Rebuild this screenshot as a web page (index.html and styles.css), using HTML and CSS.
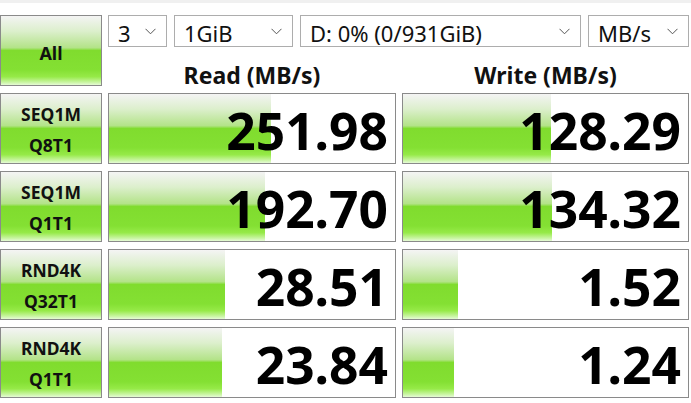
FILE: index.html
```html
<!DOCTYPE html>
<html>
<head>
<meta charset="utf-8">
<link rel="stylesheet" href="styles.css">
</head>
<body>
<div class="topstrip"></div>
<div class="grid">
  <div class="btn all">All</div>
  <div class="head">
    <div class="selects">
      <div class="sel w1"><span>3</span><svg class="chev" width="11" height="7" viewBox="0 0 11 7"><path d="M0.5 0.8 L5.5 5.8 L10.5 0.8" fill="none" stroke="#555" stroke-width="1"/></svg></div>
      <div class="sel w2"><span>1GiB</span><svg class="chev" width="11" height="7" viewBox="0 0 11 7"><path d="M0.5 0.8 L5.5 5.8 L10.5 0.8" fill="none" stroke="#555" stroke-width="1"/></svg></div>
      <div class="sel w3"><span>D: 0% (0/931GiB)</span><svg class="chev" width="11" height="7" viewBox="0 0 11 7"><path d="M0.5 0.8 L5.5 5.8 L10.5 0.8" fill="none" stroke="#555" stroke-width="1"/></svg></div>
      <div class="sel w4"><span>MB/s</span><svg class="chev" width="11" height="7" viewBox="0 0 11 7"><path d="M0.5 0.8 L5.5 5.8 L10.5 0.8" fill="none" stroke="#555" stroke-width="1"/></svg></div>
    </div>
    <div class="titles">
      <div class="title">Read (MB/s)</div>
      <div class="title">Write (MB/s)</div>
    </div>
  </div>

  <div class="btn label">SEQ1M<br>Q8T1</div>
  <div class="cell"><div class="bar" style="width:162px"></div><span class="val">251.98</span></div>
  <div class="cell"><div class="bar" style="width:148px"></div><span class="val">128.29</span></div>

  <div class="btn label">SEQ1M<br>Q1T1</div>
  <div class="cell"><div class="bar" style="width:156px"></div><span class="val">192.70</span></div>
  <div class="cell"><div class="bar" style="width:149px"></div><span class="val">134.32</span></div>

  <div class="btn label">RND4K<br>Q32T1</div>
  <div class="cell"><div class="bar" style="width:116px"></div><span class="val">28.51</span></div>
  <div class="cell"><div class="bar" style="width:55px"></div><span class="val">1.52</span></div>

  <div class="btn label">RND4K<br>Q1T1</div>
  <div class="cell"><div class="bar" style="width:113px"></div><span class="val">23.84</span></div>
  <div class="cell"><div class="bar" style="width:51px"></div><span class="val">1.24</span></div>
</div>
</body>
</html>
```

FILE: styles.css
```css
* { box-sizing: border-box; }
html, body { margin: 0; padding: 0; background: #ffffff; }
body {
  width: 691px;
  height: 403px;
  overflow: hidden;
  font-family: "Noto Sans", "Open Sans", sans-serif;
  color: #000;
}
.topstrip {
  height: 3px;
  background: #f0f0f0;
}
.grid {
  margin-top: 12px;
  display: grid;
  grid-template-columns: 102px 288px 287px;
  grid-template-rows: 71px 71px 71px 71px 71px;
  column-gap: 6px;
  row-gap: 7px;
}
.btn {
  border: 1px solid #8a8a8a;
  background: linear-gradient(to bottom, #f4f4f4 0%, #dcefcc 22%, #b3e388 46%, #80dc2e 50%, #84e033 78%, #96ea48 88%, #c9f5a2 96%, #e6fbd6 100%);
  display: flex;
  align-items: center;
  justify-content: center;
  text-align: center;
  font-weight: 700;
  color: #111;
}
.all {
  font-size: 18px;
  padding-top: 4px;
}
.label {
  font-size: 17.5px;
  line-height: 31px;
  padding-top: 2px;
}
.head {
  grid-column: 2 / 4;
  display: flex;
  flex-direction: column;
}
.selects {
  display: flex;
  gap: 7px;
  height: 36px;
}
.sel {
  border: 1px solid #adadad;
  background: #fff;
  display: flex;
  align-items: center;
  justify-content: space-between;
  padding: 0 10px 0 9px;
  font-size: 22px;
  color: #111;
}
.sel span { position: relative; top: 2px; }
.w1 { width: 59px; }
.w2 { width: 119px; }
.w3 { width: 281px; }
.w4 { width: 101px; }
.chev { flex: none; }
.titles {
  flex: 1;
  display: grid;
  grid-template-columns: 288px 287px;
  column-gap: 6px;
}
.title {
  text-align: center;
  font-weight: 700;
  font-size: 23px;
  line-height: 30px;
  padding-top: 13px;
  color: #111;
}
.cell {
  position: relative;
  border: 1px solid #8a8a8a;
  background: #fff;
  display: flex;
  align-items: center;
  justify-content: flex-end;
  padding-right: 7px;
  overflow: hidden;
}
.bar {
  position: absolute;
  left: 0;
  top: 0;
  bottom: 0;
  background: linear-gradient(to bottom, #f4f4f4 0%, #dcefcc 22%, #b3e388 46%, #80dc2e 50%, #84e033 78%, #96ea48 88%, #c9f5a2 96%, #e6fbd6 100%);
}
.val {
  position: relative;
  font-weight: 700;
  font-size: 51.5px;
  line-height: 1;
  top: 2px;
  color: #000;
}
```
